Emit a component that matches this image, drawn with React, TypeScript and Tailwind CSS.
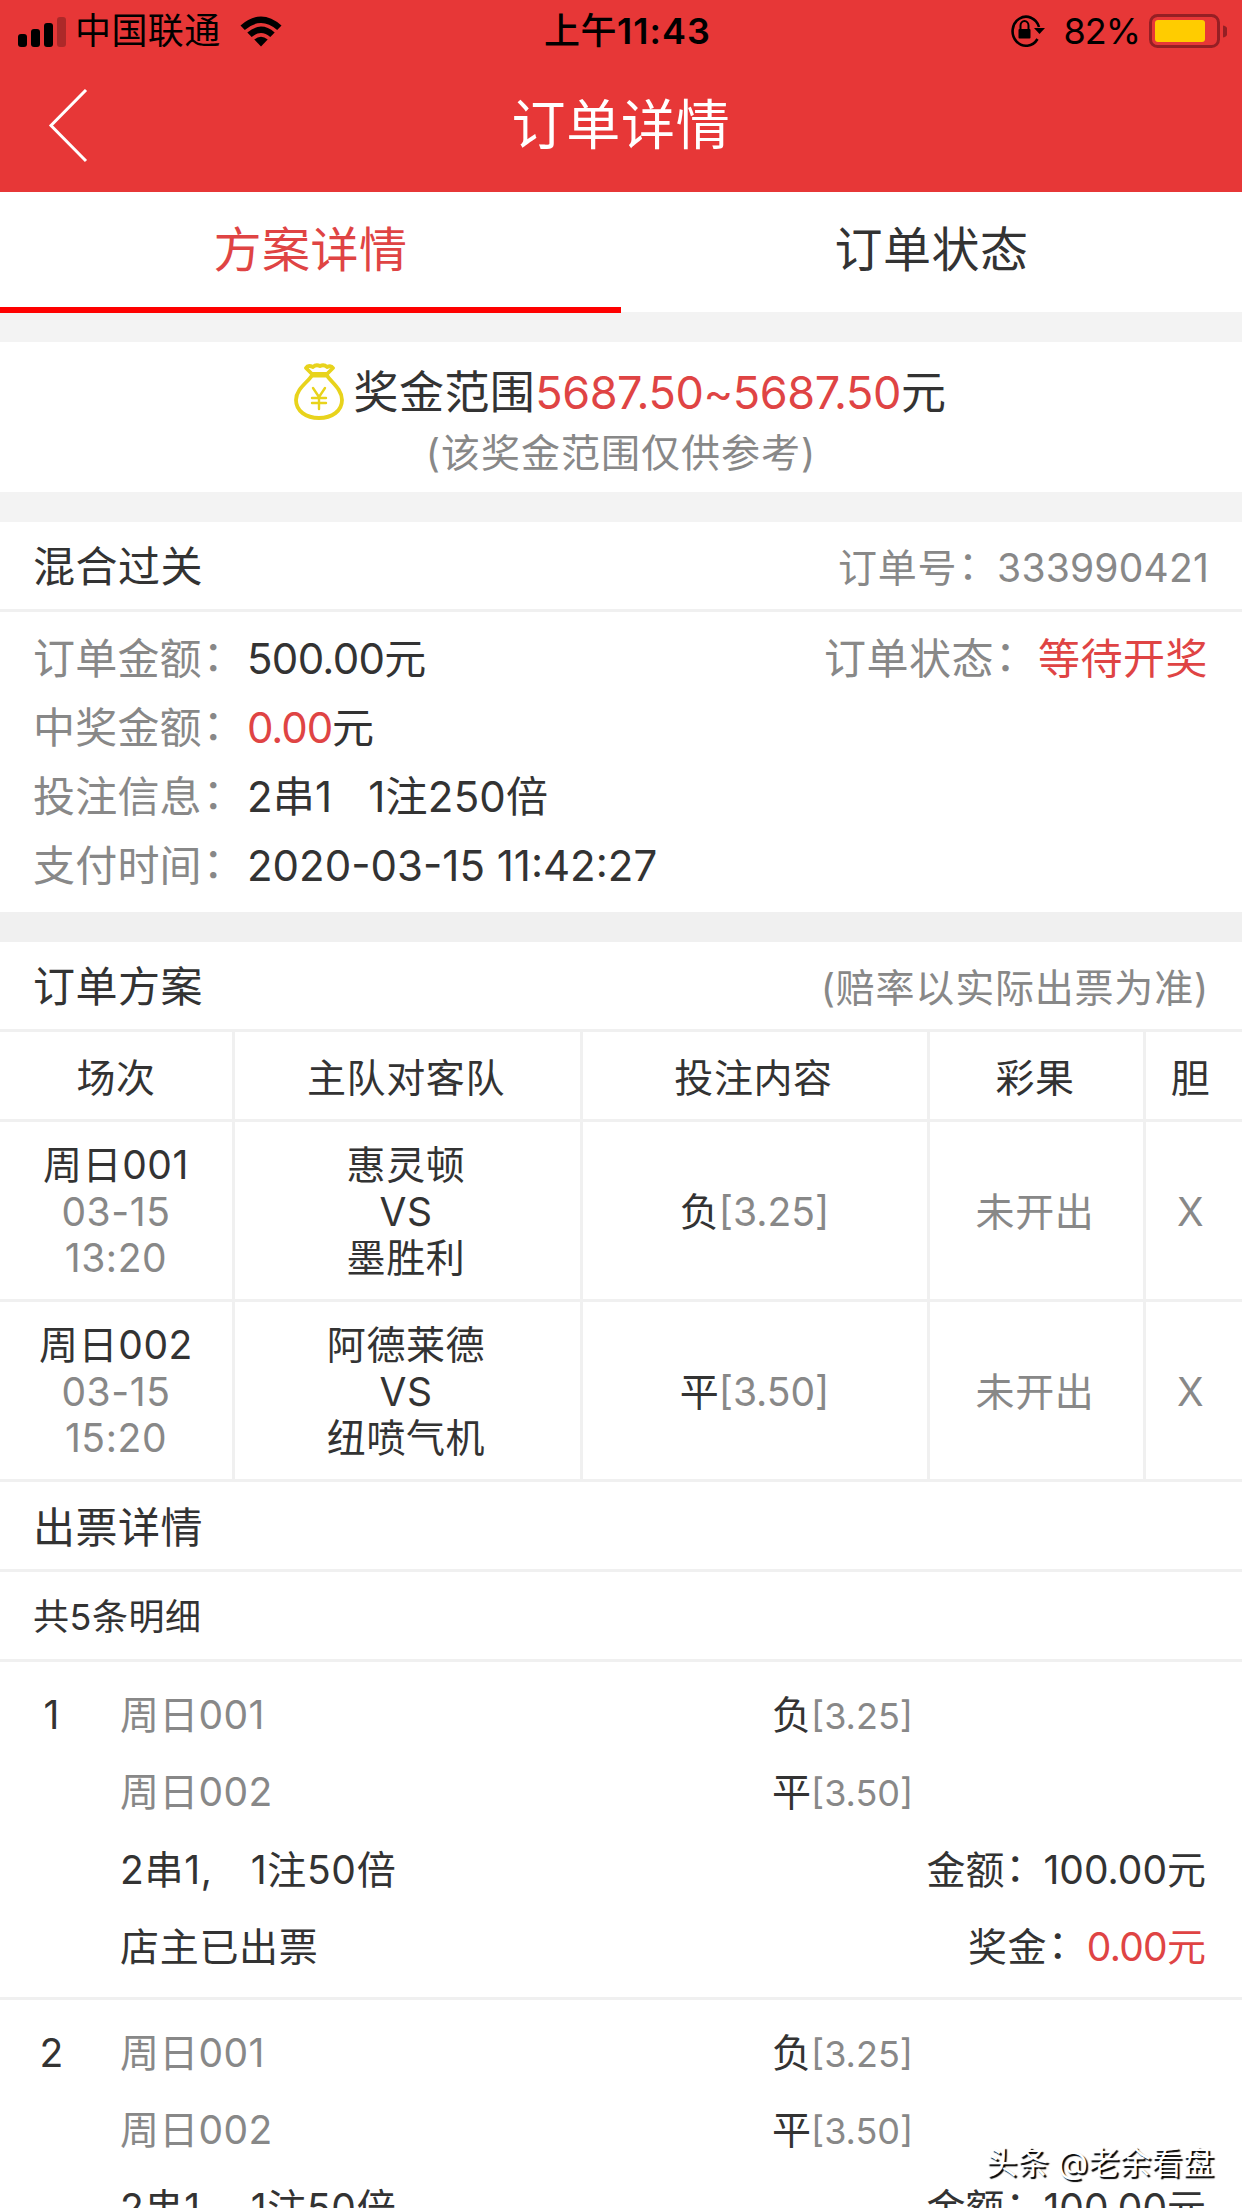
import React from "react";

const matches = [
  { no: "周日001", date: "03-15", time: "13:20", home: "惠灵顿", away: "墨胜利", pick: "负", odds: "[3.25]" },
  { no: "周日002", date: "03-15", time: "15:20", home: "阿德莱德", away: "纽喷气机", pick: "平", odds: "[3.50]" },
];

const columns = "grid grid-cols-[235px_348px_347px_216px_96px]";
const cell = "flex flex-col items-center justify-center border-r-[3px] border-[#f0f0f0] pr-[3px] pt-[3px]";
const firstCell = "flex flex-col items-center justify-center border-r-[3px] border-[#f0f0f0] pt-[3px]";
const lastCell = "flex items-center justify-center pr-[7px] pt-[3px]";

function StatusBar() {
  return (
    <div className="grid h-[62px] grid-cols-3 items-center pl-[17px] pr-[15px] text-[36px] leading-none text-black">
      <div className="flex items-center">
        <svg width="50" height="38" viewBox="0 0 50 38" className="mr-[8px]">
          <rect x="1" y="22" width="9" height="13" rx="3" />
          <rect x="14" y="17" width="9" height="18" rx="3" />
          <rect x="27" y="11" width="9" height="24" rx="3" />
          <rect x="40" y="5" width="9" height="30" rx="3" opacity="0.25" />
        </svg>
        <span className="tracking-[0.4px]">中国联通</span>
        <svg width="44" height="32" viewBox="0 0 44 32" className="ml-[18px]">
          <path d="M1.5 10.5 Q22 -7.5 42.500 10.500 L38.200 15 Q22 1 5.800 15 Z" />
          <path d="M8.300 17.500 Q22 5.700 35.700 17.500 L31.300 22 Q22 14.200 12.700 22 Z" />
          <path d="M15.300 24.500 Q22 19 28.700 24.500 L22 31.500 Z" />
        </svg>
      </div>
      <div className="whitespace-nowrap pl-[11px] text-center font-semibold tracking-[1px]">
        <span className="font-medium tracking-[0.5px]">上午</span>11:43
      </div>
      <div className="flex items-center justify-end">
        <svg width="35" height="38" viewBox="0 0 35 38" className="mr-[18px]">
          <path d="M27.500 27 A13.500 14.500 0 1 1 29 15" fill="none" stroke="black" strokeWidth="2.600" />
          <path d="M24 16 H35 L29.500 22 Z" />
          <rect x="8.500" y="17" width="12" height="9.500" rx="1" />
          <path d="M10.500 18 V13.500 a4 4.500 0 0 1 8 0 V18" fill="none" stroke="black" strokeWidth="2" />
        </svg>
        <span className="tracking-[-1px]">82%</span>
        <svg width="78" height="34" viewBox="0 0 78 34" className="ml-[9px]">
          <rect x="1.500" y="1.500" width="68" height="31" rx="7" fill="none" stroke="#951f24" strokeWidth="3" />
          <rect x="6" y="6" width="50" height="22" rx="3" fill="#ffcc00" />
          <path d="M74 11.500 a5 6 0 0 1 0 12 Z" fill="#951f24" />
        </svg>
      </div>
    </div>
  );
}

function MoneyBag() {
  return (
    <svg width="50" height="58" viewBox="0 0 50 58" fill="none" stroke="#e8d31c" strokeWidth="3.800" strokeLinecap="round" strokeLinejoin="round">
      <path d="M18 11 L12 5 Q14 1.500 19 4 Q22 1 26 3 Q30 1 33 4 Q37 2 39 5 L33 11 Z" />
      <path d="M18 12.500 C14 19 2 26 2 37 C2 48 12 55 25 55 C38 55 48 48 48 37 C48 26 37 19 33 12.500 Z" />
      <path d="M19 25 L25 34 L31 25 M25 34 V46 M18 35 H32 M18 40 H32" strokeWidth="2.400" />
    </svg>
  );
}

function Colon() {
  return <span className="relative -top-[3px] left-px">：</span>;
}

function DetailRow({ label, children }: { label: string; children: React.ReactNode }) {
  return (
    <div className="flex h-[69px] items-center">
      <span className="w-[214px] text-[#888]">{label}<Colon /></span>
      {children}
    </div>
  );
}

function Ticket({ index }: { index: number }) {
  return (
    <div className="flex h-[338px] border-b-[3px] border-[#f0f0f0] pr-[36px] pt-[14px] text-[39px]">
      <div className="h-[77.400px] w-[120px] pr-[17px] text-center leading-[77.400px]">{index}</div>
      <div className="flex-1 leading-[77.400px]">
        {matches.map((m) => (
          <div key={m.no} className="flex h-[77.400px] items-center text-[#888]">
            <span className="w-[652px] tracking-[0.3px]">{m.no}</span>
            <span className="text-[39px] text-[#333]">{m.pick}</span>
            <span className="pt-[3px] text-[36px]">{m.odds}</span>
          </div>
        ))}
        <div className="flex h-[77.400px] justify-between">
          <span className="tracking-[0.7px]">2串1,<span className="ml-[38px]">1注50倍</span></span>
          <span>金额<Colon />100.00元</span>
        </div>
        <div className="flex h-[77.400px] justify-between">
          <span className="tracking-[0.7px]">店主已出票</span>
          <span><span className="tracking-[0.6px]">奖金<Colon /></span><span className="text-[#df4444]"><span className="tracking-[-0.7px]">0.00</span>元</span></span>
        </div>
      </div>
    </div>
  );
}

export default function App() {
  return (
    <div className="relative h-[2208px] w-[1242px] overflow-hidden bg-white font-['Inter','Noto_Sans_CJK_SC',sans-serif] text-[42px] leading-none text-[#333]">
      <header className="h-[192px] bg-[#e73737]">
        <StatusBar />
        <div className="grid h-[128px] grid-cols-3 items-center text-[54px] text-white">
          <svg width="40" height="74" viewBox="0 0 40 74" className="ml-[48px]" fill="none" stroke="white" strokeWidth="3">
            <path d="M38 1 L3 36.500 L38 72" />
          </svg>
          <h1 className="text-center tracking-[0.8px]">订单详情</h1>
        </div>
      </header>

      <nav className="grid h-[120px] grid-cols-2 text-center text-[48px] leading-[115px] tracking-[0.5px]">
        <div className="border-b-[6px] border-[#fe0000] text-[#df4444]">方案详情</div>
        <div>订单状态</div>
      </nav>

      <div className="h-[30px] bg-[#f3f3f3]" />
      <section className="flex h-[150px] flex-col items-center pt-[20px]">
        <div className="flex h-[60px] items-center pr-[2px] text-[45px]">
          <MoneyBag />
          <span className="ml-[10px] tracking-[0.4px]">奖金范围<span className="text-[#df4444] tracking-[-0.4px]">5687.50~5687.50</span>元</span>
        </div>
        <p className="text-[39px] leading-[62px] tracking-[1px] text-[#888]">(该奖金范围仅供参考)</p>
      </section>
      <div className="h-[30px] bg-[#f3f3f3]" />

      <section>
        <div className="flex h-[90px] items-center justify-between border-b-[3px] border-[#f0f0f0] px-[33px] pt-[3px]">
          <h2 className="tracking-[0.5px]">混合过关</h2>
          <span className="text-[39px] text-[#888]"><span className="tracking-[0.8px]">订单号<Colon /></span><span className="tracking-[0.2px]">333990421</span></span>
        </div>
        <div className="flex h-[300px] justify-between pl-[33px] pr-[34px] pt-[12px]">
          <div className="tracking-[0.2px]">
            <DetailRow label="订单金额"><span className="tracking-[-0.7px]">500.00</span>元</DetailRow>
            <DetailRow label="中奖金额"><span className="text-[#df4444] tracking-[-1.1px]">0.00</span>元</DetailRow>
            <DetailRow label="投注信息"><span className="whitespace-pre">2串1   1注250倍</span></DetailRow>
            <DetailRow label="支付时间"><span className="tracking-normal">2020-03-15 11:42:27</span></DetailRow>
          </div>
          <div className="tracking-[0.5px]">
            <DetailRow label="订单状态"><span className="text-[#df4444]">等待开奖</span></DetailRow>
          </div>
        </div>
      </section>
      <div className="h-[30px] bg-[#f0f0f0]" />

      <section>
        <div className="flex h-[90px] items-center justify-between border-b-[3px] border-[#f0f0f0] px-[33px] pt-[3px]">
          <h2 className="tracking-[0.5px]">订单方案</h2>
          <span className="text-[39px] tracking-[0.8px] text-[#888]">(赔率以实际出票为准)</span>
        </div>
        <div className="text-[39px] tracking-[0.6px]">
          <div className={columns + " h-[90px] border-b-[3px] border-[#f0f0f0]"}>
            <div className={firstCell}>场次</div>
            <div className={cell}>主队对客队</div>
            <div className={cell}>投注内容</div>
            <div className={cell}>彩果</div>
            <div className={lastCell}>胆</div>
          </div>
          {matches.map((m) => (
            <div key={m.no} className={columns + " h-[180px] border-b-[3px] border-[#f0f0f0] leading-[46.500px]"}>
              <div className={firstCell}>
                <span>{m.no}</span>
                <span className="text-[#888]">{m.date}</span>
                <span className="text-[#888]">{m.time}</span>
              </div>
              <div className={cell}>
                <span>{m.home}</span>
                <span>VS</span>
                <span>{m.away}</span>
              </div>
              <div className={cell}><span className="pl-[2px] tracking-normal">{m.pick}<span className="text-[#888]">{m.odds}</span></span></div>
              <div className={cell}><span className="text-[#888]">未开出</span></div>
              <div className={lastCell}><span className="text-[#888]">X</span></div>
            </div>
          ))}
        </div>
      </section>

      <section>
        <h2 className="h-[90px] border-b-[3px] border-[#f0f0f0] px-[33px] leading-[91px] tracking-[0.5px]">出票详情</h2>
        <p className="h-[90px] border-b-[3px] border-[#f0f0f0] px-[33px] text-[36px] leading-[91px] tracking-[0.5px]">共5条明细</p>
        <Ticket index={1} />
        <Ticket index={2} />
      </section>

      <div className="absolute bottom-[25px] right-[28px] text-[31.500px] leading-[40px] text-white [text-shadow:2px_2px_1px_#000]">头条 @老余看盘</div>
    </div>
  );
}
